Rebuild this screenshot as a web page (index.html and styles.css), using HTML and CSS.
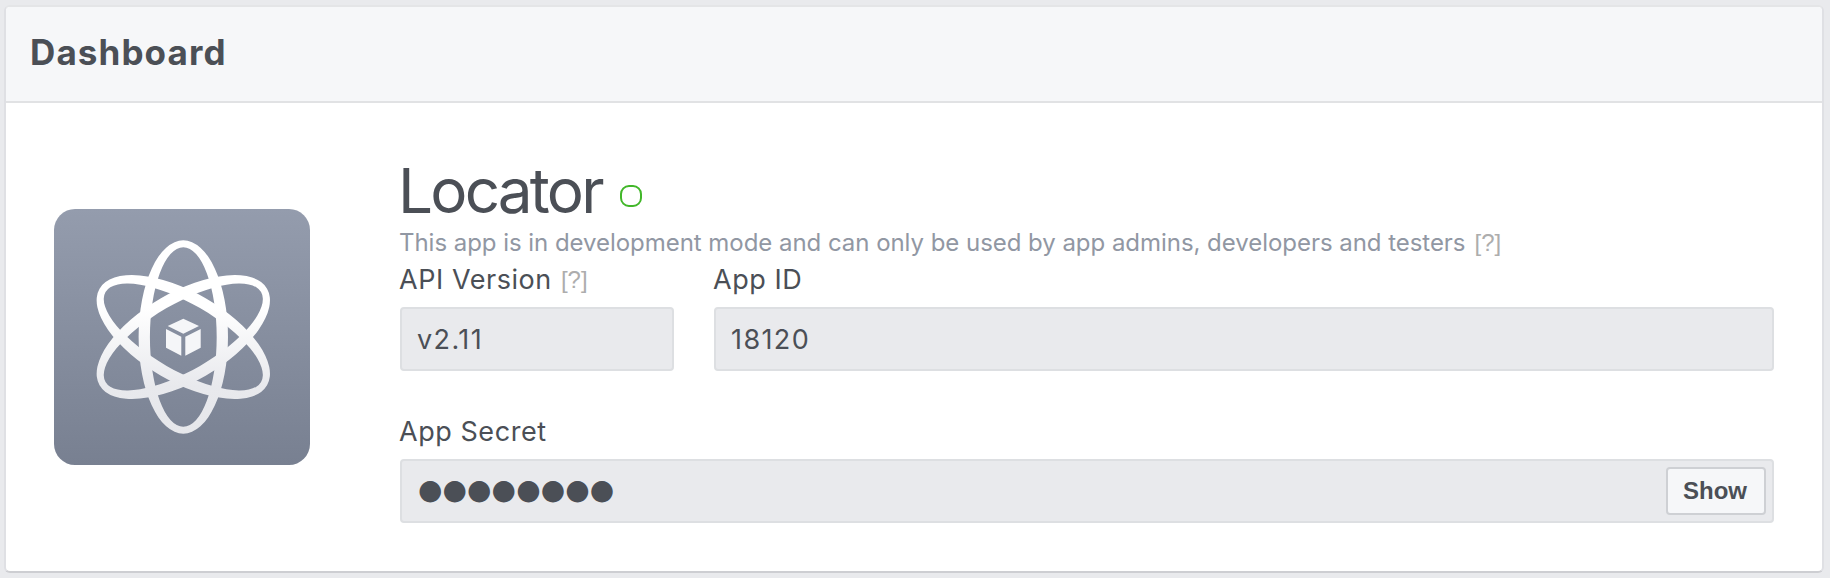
FILE: index.html
```html
<!DOCTYPE html>
<html lang="en">
<head>
<meta charset="utf-8">
<title>Dashboard</title>
<link rel="stylesheet" href="styles.css">
</head>
<body>
<main class="card">
  <header class="card-header"><h1 class="card-title">Dashboard</h1></header>
  <div class="card-body">
    <svg class="app-icon" viewBox="0 0 256 256" aria-hidden="true">
      <defs>
        <linearGradient id="bg" x1="0" y1="0" x2="0" y2="1"><stop offset="0" stop-color="#949cad"/><stop offset="1" stop-color="#788091"/></linearGradient>
        <linearGradient id="fg" gradientUnits="userSpaceOnUse" x1="0" y1="31" x2="0" y2="225"><stop offset="0.35" stop-color="#fff"/><stop offset="0.75" stop-color="#e8e9ed"/><stop offset="1" stop-color="#e6e7eb"/></linearGradient>
        <path id="orbit" fill="#fff" fill-rule="evenodd" d="M0-96.7A44.7 96.7 0 0 1 0 96.7A44.7 96.7 0 0 1 0-96.7ZM0-89.8A33.4 89.8 0 0 0 0 89.8A33.4 89.8 0 0 0 0-89.8Z"/>
        <mask id="orbits" maskUnits="userSpaceOnUse" x="0" y="0" width="256" height="256">
          <g transform="translate(129.3 128)">
            <use href="#orbit"/>
            <use href="#orbit" transform="rotate(60)"/>
            <use href="#orbit" transform="rotate(-60)"/>
          </g>
        </mask>
      </defs>
      <rect width="256" height="256" rx="21" fill="url(#bg)"/>
      <rect width="256" height="256" fill="url(#fg)" mask="url(#orbits)"/>
      <path fill="#f5f6f8" d="M129.3 109.7L145 117L129.3 124.7L113.7 117ZM112 120L127.3 127.7V146.7L112 138.7ZM131.3 127.7L146.7 120V138.7L131.3 146.7Z"/>
    </svg>
    <section class="details">
      <div class="name-row"><h2 class="app-name">Locator</h2><span class="status"></span></div>
      <p class="description"><span class="description-text">This app is in development mode and can only be used by app admins, developers and testers</span><span class="help">[?]</span></p>
      <div class="fields">
        <div class="field">
          <div class="label"><span class="label-text">API Version</span><span class="help">[?]</span></div>
          <div class="value">v2.11</div>
        </div>
        <div class="field">
          <div class="label"><span class="label-text">App ID</span></div>
          <div class="value">18120</div>
        </div>
        <div class="field field-wide">
          <div class="label"><span class="label-text">App Secret</span></div>
          <div class="value"><span class="secret">●●●●●●●●</span><button class="show" type="button">Show</button></div>
        </div>
      </div>
    </section>
  </div>
</main>
</body>
</html>
```
FILE: styles.css
```css
* { box-sizing: border-box; }
body {
  margin: 0;
  height: 578px;
  padding: 5px 6px 5px 4px;
  background: #e9eaed;
  color: #4b4f56;
  font-family: Inter, "Liberation Sans", sans-serif;
}
h1, h2, p { margin: 0; }
.card {
  height: 568px;
  border: 2px solid #dfe0e4;
  border-top-color: #e4e5e7;
  border-bottom-color: #cdced2;
  border-radius: 6px;
  background: #fff;
  overflow: hidden;
}
.card-header {
  display: flex;
  align-items: center;
  height: 96px;
  padding: 0 24px 4px;
  border-bottom: 2px solid #e1e2e4;
  background: #f6f7f9;
}
.card-title {
  font-size: 35px;
  line-height: 44px;
  font-weight: 700;
  letter-spacing: 1.1px;
}
.card-body {
  display: flex;
  align-items: flex-start;
  gap: 90px;
  padding: 54px 48px 0;
}
.app-icon { flex: none; width: 256px; height: 256px; margin-top: 52px; }
.details { flex: 1; min-width: 0; }
.name-row { display: flex; align-items: center; height: 69px; gap: 18px; }
.app-name {
  margin: -2px 0 0 -2px;
  font-size: 62px;
  line-height: 67px;
  font-weight: 400;
  letter-spacing: -2.8px;
}
.status {
  width: 22px;
  height: 22px;
  margin-top: 9px;
  border: 2px solid #42b72a;
  border-radius: 9px;
}
.description {
  display: flex;
  align-items: center;
  height: 33px;
  color: #9197a3;
  font-size: 24px;
  line-height: 33px;
  white-space: nowrap;
}
.description-text { margin-left: -1px; letter-spacing: -0.04px; }
.help {
  margin-left: 9px;
  color: #adadad;
  font: 24px/34px "Liberation Sans", Arial, sans-serif;
}
.fields {
  display: grid;
  grid-template-columns: 274px 1fr;
  column-gap: 40px;
  row-gap: 40px;
}
.field-wide { grid-column: 1 / -1; }
.label {
  display: flex;
  align-items: center;
  height: 48px;
  padding-bottom: 6px;
  font-size: 27px;
  line-height: 40px;
}
.label-text { margin-left: -1px; letter-spacing: 0.55px; }
.value {
  display: flex;
  align-items: center;
  justify-content: space-between;
  height: 64px;
  padding: 0 6px 0 15px;
  border: 2px solid #dddfe2;
  border-radius: 4px;
  background: #e9eaed;
  font-size: 27px;
  letter-spacing: 1.4px;
}
.secret {
  padding: 0 0 3px 1px;
  font: 28px/40px "DejaVu Sans", sans-serif;
  letter-spacing: 0.1px;
}
.show {
  width: 100px;
  height: 48px;
  padding: 0 2px 0 0;
  border: 2px solid #ced0d4;
  border-radius: 4px;
  background: #f6f7f9;
  color: #4b4f56;
  font: bold 24px/28px "Liberation Sans", Arial, sans-serif;
}
```
